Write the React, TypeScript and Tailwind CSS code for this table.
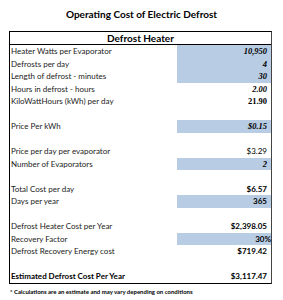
import React from 'react'

type Row = {
  label?: string
  value?: string
  input?: boolean
  kind?: 'serif' | 'serifPlain' | 'sans' | 'sansBold'
  strong?: boolean
}

const ROWS: Row[] = [
  { label: 'Heater Watts per Evaporator', value: '10,950', input: true, kind: 'serif' },
  { label: 'Defrosts per day', value: '4', input: true, kind: 'serif' },
  { label: 'Length of defrost - minutes', value: '30', input: true, kind: 'serif' },
  { label: 'Hours in defrost - hours', value: '2.00', kind: 'serif' },
  { label: 'KiloWattHours (kWh) per day', value: '21.90', kind: 'serifPlain' },
  {},
  { label: 'Price Per kWh', value: '$0.15', input: true, kind: 'serif' },
  {},
  { label: 'Price per day per evaporator', value: '$3.29', kind: 'sans' },
  { label: 'Number of Evaporators', value: '2', input: true, kind: 'serif' },
  {},
  { label: 'Total Cost per day', value: '$6.57', kind: 'sansBold' },
  { label: 'Days per year', value: '365', input: true, kind: 'sansBold' },
  {},
  { label: 'Defrost Heater Cost per Year', value: '$2,398.05', kind: 'sansBold' },
  { label: 'Recovery Factor', value: '30%', input: true, kind: 'sansBold' },
  { label: 'Defrost Recovery Energy cost', value: '$719.42', kind: 'sansBold' },
  {},
  { label: 'Estimated Defrost Cost Per Year', value: '$3,117.47', kind: 'sansBold', strong: true },
]

const valueClass = {
  serif: "font-['Liberation_Serif',serif] font-bold italic text-[8.5px]",
  serifPlain: "font-['Liberation_Serif',serif] font-bold text-[8.5px]",
  sans: 'text-[8px]',
  sansBold: 'font-bold text-[8px]',
}

export default function App() {
  return (
    <div className="w-[283px] h-[300px] bg-white text-black font-['Lato',sans-serif]">
      {/* Titre */}
      <div className="h-[31px] pt-[8px] text-center text-[10px] font-bold leading-[12px]">
        Operating Cost of Electric Defrost
      </div>

      <div className="ml-[9px] w-[263px] border border-black border-r-[#444]">
        <div className="h-[13px] border-b border-black text-center text-[10px] font-bold leading-[12px]">
          Defrost Heater
        </div>
        {ROWS.map((r, i) => (
          <div key={i} className="flex h-[12.5px] items-center leading-none">
            <div className="w-[167px] pl-[1px] text-[8px] text-[#222]">
              <span className={r.strong ? 'font-bold text-black' : ''}>{r.label}</span>
            </div>
            <div
              className={`flex h-full flex-1 items-center justify-end ${
                r.input ? 'bg-[#b8cce4]' : ''
              } ${r.value === '30%' ? 'pr-0' : 'pr-[4px]'}`}
            >
              {r.value && <span className={valueClass[r.kind || 'sans']}>{r.value}</span>}
            </div>
          </div>
        ))}
      </div>

      <div className="mt-[4px] pl-[10px] text-[6px] font-bold leading-[8px]">
        * Calculations are an estimate and may vary depending on conditions
      </div>
    </div>
  )
}
